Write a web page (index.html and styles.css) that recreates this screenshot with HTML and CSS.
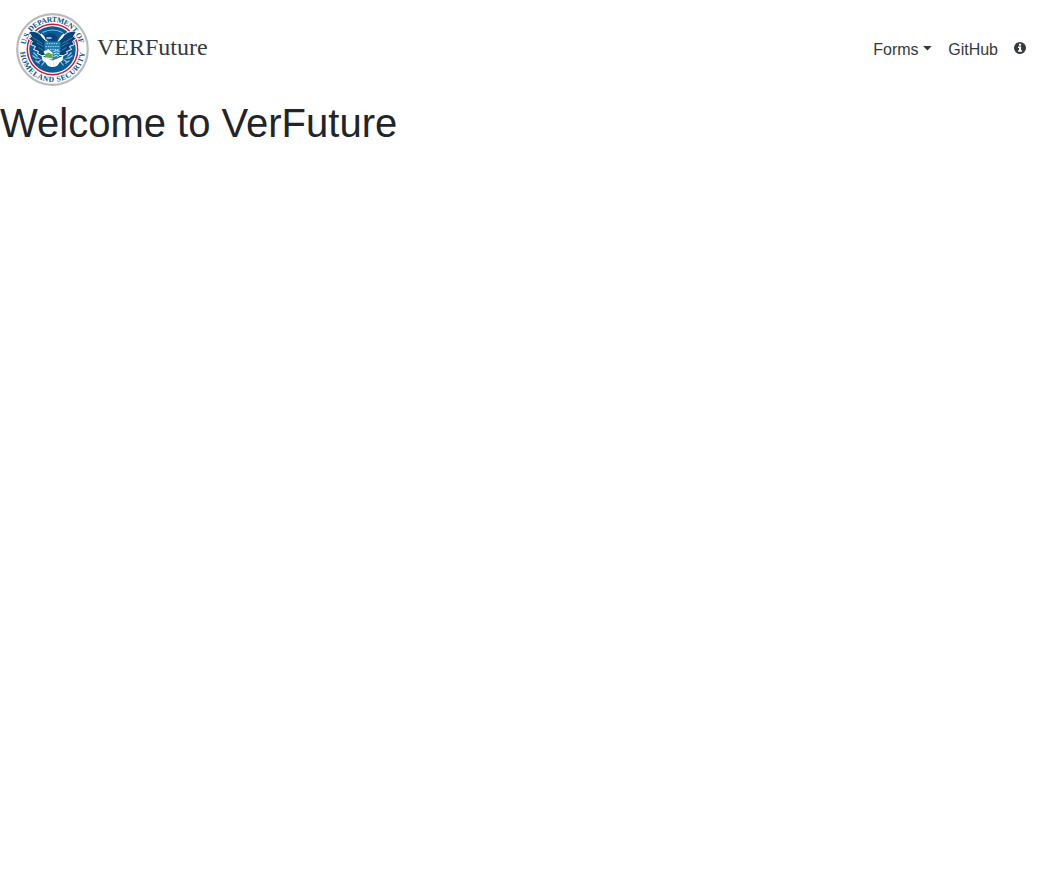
FILE: index.html
```html
<!DOCTYPE html>
<html lang="en">
<head>
<meta charset="utf-8">
<title>VERFuture</title>
<link rel="stylesheet" href="styles.css">
</head>
<body>
<nav class="navbar">
  <a class="brand" href="#">
    <svg class="seal" viewBox="-36.5 -36.5 73 73" aria-hidden="true">
      <defs>
        <path id="arc-top" d="M-26.9 -4.9A27.3 27.3 0 0 1 26.9 -4.9"/>
        <path id="arc-bottom" d="M-32.3 2.6A32.4 32.4 0 0 0 32.3 2.6"/>
      </defs>
      <circle r="35.3" fill="#fff" stroke="#b9babd" stroke-width="2.2"/>
      <circle r="25.2" fill="#fff" stroke="#c41f3a" stroke-width="1.5"/>
      <circle r="23.2" fill="#0a5c98"/>
      <!-- pale sky beside the head -->
      <path d="M-11-16L-8-13L-5-8H-9L-14-14ZM11-16L8-13L5-8H9L14-14Z" fill="#fff"/>
      <path d="M-10-17Q0-22 10-17" fill="none" stroke="#8fc0dc" stroke-width="1.2"/>
      <!-- wings -->
      <path d="M-24-18Q-14-20-9-11L-4-7V6H-11L-15 4L-14 2L-19 0L-17-3L-22-5L-20-8L-24-11L-21-13Z" fill="#07447c" stroke="#fff" stroke-width="1"/>
      <path d="M24-18Q14-20 9-11L4-7V6H11L15 4L14 2L19 0L17-3L22-5L20-8L24-11L21-13Z" fill="#07447c" stroke="#fff" stroke-width="1"/>
      <path d="M-20-12L-10-6M-16-7L-9-3M-14-2L-9 1M20-12L10-6M16-7L9-3M14-2L9 1" stroke="#6ca0c3" stroke-width=".6"/>
      <!-- head -->
      <path d="M-8-13Q-5-17 0-16Q6-15 5-7H-4L-3-10L-7-10Z" fill="#07447c"/>
      <path d="M-6-11.5H-1" stroke="#fff" stroke-width="1.2"/>
      <!-- breast shield -->
      <path d="M-8-8H8V2L6 8L0 11L-6 8L-8 2Z" fill="#2580b5"/>
      <path d="M-6-6H6M-7-3H7M-5 0H6" stroke="#a2d7e9" stroke-width="1" stroke-dasharray="1.4 1"/>
      <path d="M-9 2L-4 0L0 3V10L-6 9Z" fill="#fff"/>
      <path d="M-8 5L-4 3L0 5V9L-6 8Z" fill="#59ad45"/>
      <path d="M1 2Q4 0 7 2M1 4.5Q4 2.5 7 4.5M1 7Q4 5 6 7" fill="none" stroke="#d8edf5" stroke-width="1"/>
      <!-- olive branch and arrows -->
      <path d="M-19 3L-15 7M-18 8L-13 9M-15 13L-11 10M-11 16L-8 12M-17 11L-13 14M19 3L15 7M18 8L13 9M15 13L11 10M11 16L8 12M17 11L13 14M-20 6L-16 9M20 6L16 9" stroke="#a5c8dc" stroke-width="1.1"/>
      <!-- tail and talons -->
      <path d="M-11 6L-7 8L0 11L7 8L11 6L10 11L7 13L5 16Q0 19-5 16L-7 13L-10 11Z" fill="#fff"/>
      <path d="M-3 13L-2 16M1 13V17M4 13L3 16" stroke="#b7cfde" stroke-width=".5"/>
      <g class="seal-text">
        <text><textPath href="#arc-top" textLength="75">U.S. DEPARTMENT OF</textPath></text>
        <text><textPath href="#arc-bottom" textLength="96">HOMELAND SECURITY</textPath></text>
      </g>
    </svg>
    <span class="brand-name">VERFuture</span>
  </a>
  <div class="links">
    <a class="link dropdown" href="#">Forms</a>
    <a class="link" href="#">GitHub</a>
    <a class="link info" href="#" aria-label="About">
      <svg class="info-icon" viewBox="0 0 12 12"><circle cx="6" cy="6" r="6"/><path d="M5 1.8H7.1V3.7H5ZM4 4.4H7.1V8.2H8.1V9.8H4V8.2H5V6H4Z" fill="#fff"/></svg>
    </a>
  </div>
</nav>
<h1 class="title">Welcome to VerFuture</h1>
</body>
</html>
```
FILE: styles.css
```css
* { box-sizing: border-box; }
body {
  margin: 0;
  background: #fff;
  color: #212529;
  font: 16px/1.5 "Liberation Sans", Arial, sans-serif;
}
.navbar {
  display: flex;
  align-items: center;
  justify-content: space-between;
  height: 99px;
  padding: 0 16px;
}
.brand {
  display: flex;
  align-items: center;
  gap: 8px;
  color: #343a40;
  text-decoration: none;
}
.seal { width: 73px; height: 73px; display: block; }
.seal-text {
  fill: #07508b;
  font: bold 7.6px "Liberation Serif", serif;
}
.brand-name {
  font: 24px/36px "Liberation Serif", serif;
  padding-bottom: 6px;
}
.links { display: flex; align-items: center; }
.link {
  display: flex;
  align-items: center;
  padding: 8px;
  color: #343a40;
  text-decoration: none;
}
.dropdown::after {
  content: "";
  width: 9.6px;
  height: 5px;
  margin: -3px 0 0 4px;
  background: currentColor;
  clip-path: polygon(0 0, 100% 0, 50% 100%);
}
.info { padding-bottom: 11px; }
.info-icon { width: 12px; height: 12px; fill: #343a40; }
.title {
  margin: 0;
  font-size: 40px;
  font-weight: 500;
  line-height: 48px;
}
```
